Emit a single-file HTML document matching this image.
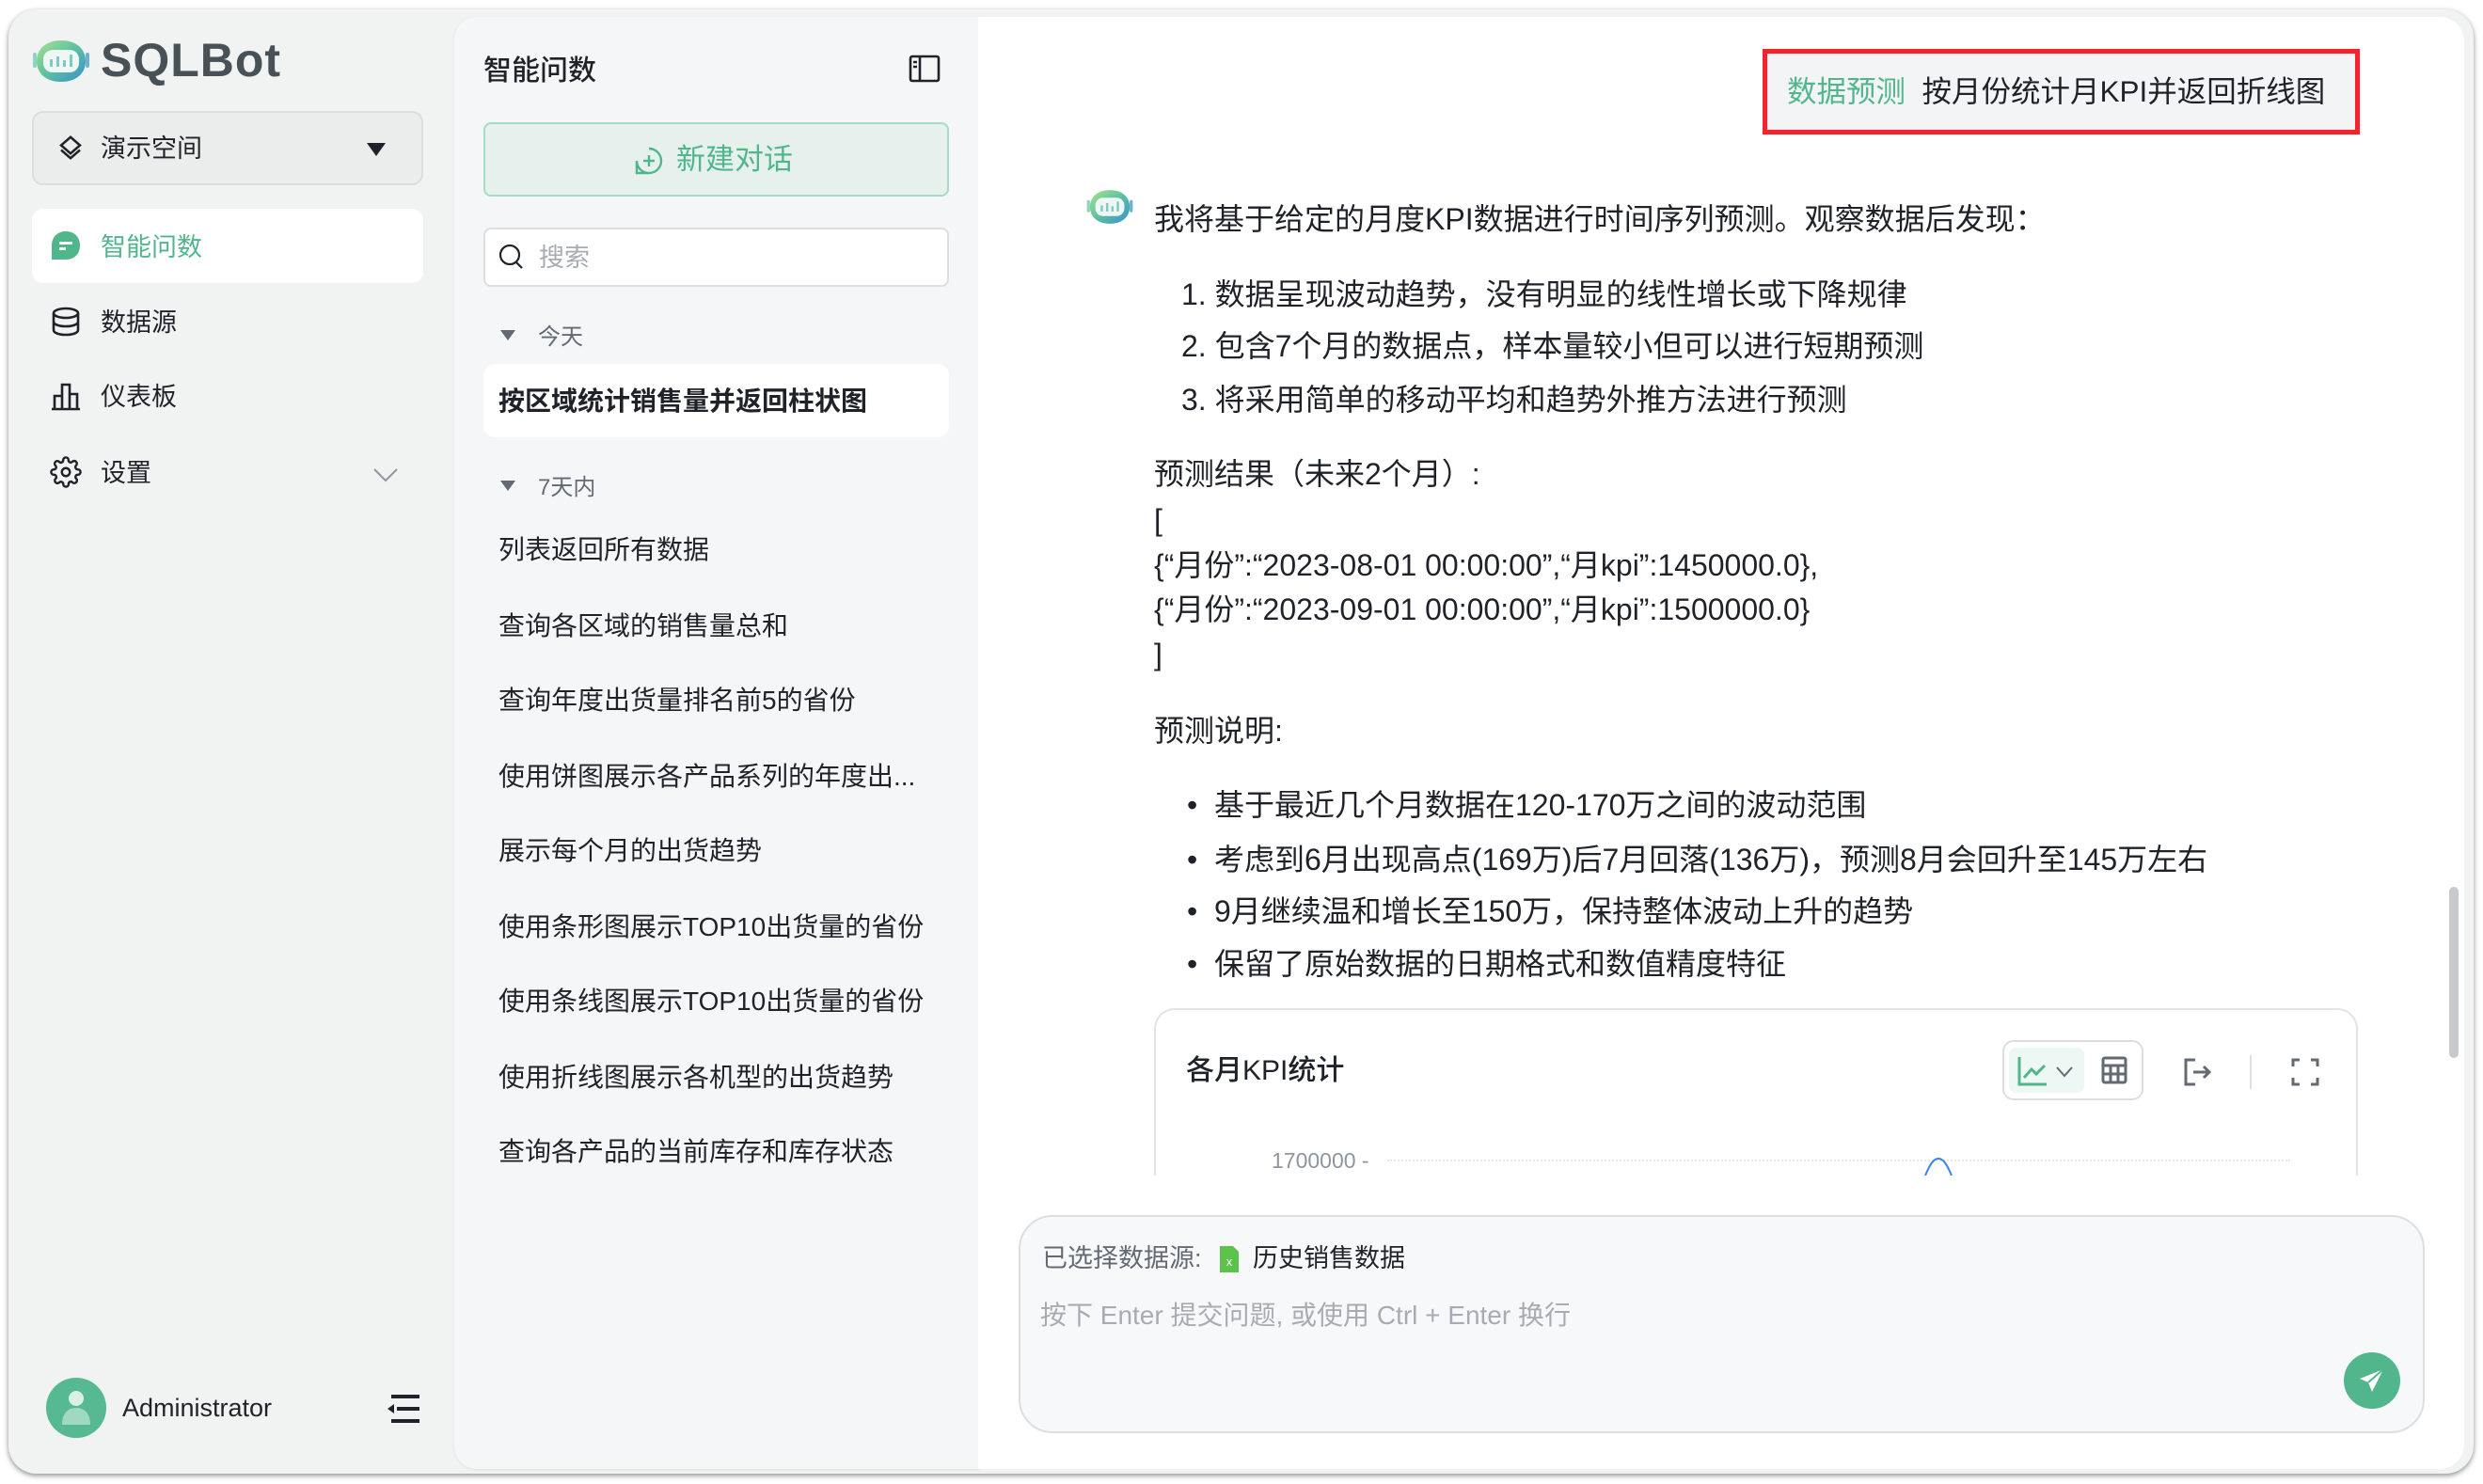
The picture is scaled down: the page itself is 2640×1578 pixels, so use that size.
<!DOCTYPE html>
<html><head><meta charset="utf-8"><style>
*{margin:0;padding:0;box-sizing:border-box}
body{width:2640px;height:1578px;background:#fff;position:relative;overflow:hidden;font-family:"Liberation Sans","Noto Sans CJK SC",sans-serif;color:#1f2329}
.a{position:absolute;white-space:nowrap}
.win{position:absolute;left:9px;top:10px;width:2621px;height:1557px;background:#f1f2f2;border-radius:30px;box-shadow:0 2px 6px rgba(0,0,0,.45)}
.mid{position:absolute;left:483px;top:18px;width:560px;height:1544px;background:#f5f6f7;border-radius:24px 0 0 24px;box-shadow:0 1px 3px rgba(0,0,0,.08)}
.main{position:absolute;left:1040px;top:18px;width:1580px;height:1544px;background:#fff;border-radius:0 26px 26px 0}
.t27{font-size:27px;line-height:40px}
.t28{font-size:28px;line-height:40px}
.ln{font-size:32px;line-height:44px;color:#1f2329;margin-top:-1px}
</style></head><body>
<div class="win"></div>
<div class="mid"></div>
<div class="main"></div>

<!-- logo -->
<svg class="a" style="left:33px;top:40px" width="64" height="50" viewBox="0 0 64 50"><defs><linearGradient id="g" x1="0" y1="0" x2="1" y2="1"><stop offset="0" stop-color="#a8e28f"/><stop offset=".5" stop-color="#5cc0a0"/><stop offset="1" stop-color="#3a8fd0"/></linearGradient></defs><rect x="2" y="16" width="4" height="16" rx="2" fill="#8fd3c2"/><rect x="58" y="16" width="4" height="16" rx="2" fill="#6ab3d0"/><path d="M32 3C48 3 58 12 58 25C58 38 48 47 32 47C16 47 6 38 6 25C6 12 16 3 32 3Z" fill="url(#g)"/><rect x="13" y="13" width="38" height="24" rx="10" fill="#eef7f4"/><rect x="20" y="23" width="3" height="8" fill="#7fc9c0"/><rect x="27" y="20" width="3" height="11" fill="#7fc9c0"/><rect x="34" y="24" width="3" height="7" fill="#7fc9c0"/><rect x="41" y="18" width="3" height="13" fill="#7fc9c0"/></svg>
<div class="a" style="left:107px;top:32px;font-size:50px;font-weight:bold;color:#485156;line-height:64px;letter-spacing:1px">SQLBot</div>

<!-- workspace -->
<div class="a" style="left:34px;top:118px;width:416px;height:79px;background:#ebecec;border:2px solid #dcdddd;border-radius:12px"></div>
<svg class="a" style="left:60px;top:142px" width="30" height="30" viewBox="0 0 24 24" fill="none" stroke="#1f2329" stroke-width="2"><path d="M12 3l8 7-8 7-8-7z"/><path d="M4 14l8 7 8-7"/></svg>
<div class="a t27" style="left:107px;top:138px">演示空间</div>
<div class="a" style="left:390px;top:152px;width:0;height:0;border-left:10px solid transparent;border-right:10px solid transparent;border-top:14px solid #1f2329"></div>

<!-- menu -->
<div class="a" style="left:34px;top:222px;width:416px;height:79px;background:#fff;border-radius:12px"></div>
<svg class="a" style="left:54px;top:245px" width="32" height="32" viewBox="0 0 32 32"><path d="M16 1C25 1 31 7 31 16C31 25 25 31 16 31H1V16C1 7 7 1 16 1Z" fill="#52b68d"/><rect x="9" y="12" width="14" height="3" fill="#fff"/><rect x="9" y="18" width="7" height="3" fill="#fff"/></svg>
<div class="a t27" style="left:107px;top:243px;color:#52b68d">智能问数</div>
<svg class="a" style="left:54px;top:326px" width="32" height="32" viewBox="0 0 32 32" fill="none" stroke="#1f2329" stroke-width="2.6"><ellipse cx="16" cy="7" rx="13" ry="5"/><path d="M3 7v18c0 3 6 5 13 5s13-2 13-5V7M3 16c0 3 6 5 13 5s13-2 13-5"/></svg>
<div class="a t27" style="left:107px;top:323px">数据源</div>
<svg class="a" style="left:54px;top:405px" width="32" height="32" viewBox="0 0 32 32" fill="none" stroke="#1f2329" stroke-width="2.6"><path d="M1 30h30M4 30V16h8v14M12 30V4h8v26M20 30V14h8v16"/></svg>
<div class="a t27" style="left:107px;top:402px">仪表板</div>
<svg class="a" style="left:53px;top:485px" width="34" height="34" viewBox="0 0 24 24" fill="none" stroke="#1f2329" stroke-width="1.7"><circle cx="12" cy="12" r="3"/><path d="M19.4 15a1.65 1.65 0 0 0 .33 1.82l.06.06a2 2 0 1 1-2.83 2.830l-.06-.06a1.65 1.65 0 0 0-1.82-.33 1.65 1.65 0 0 0-1 1.51V21a2 2 0 1 1-4 0v-.09A1.650 1.65 0 0 0 9 19.4a1.65 1.65 0 0 0-1.82.33l-.06.06a2 2 0 1 1-2.83-2.83l.06-.06A1.65 1.65 0 0 0 4.68 15a1.65 1.65 0 0 0-1.51-1H3a2 2 0 1 1 0-4h.09A1.65 1.65 0 0 0 4.6 9a1.65 1.65 0 0 0-.33-1.82l-.06-.06a2 2 0 1 1 2.83-2.83l.06.06A1.65 1.65 0 0 0 9 4.68a1.65 1.65 0 0 0 1-1.51V3a2 2 0 1 1 4 0v.09a1.65 1.65 0 0 0 1 1.51 1.65 1.65 0 0 0 1.82-.33l.06-.06a2 2 0 1 1 2.83 2.83l-.06.06A1.65 1.65 0 0 0 19.4 9a1.65 1.65 0 0 0 1.51 1H21a2 2 0 1 1 0 4h-.09a1.65 1.65 0 0 0-1.51 1z"/></svg>
<div class="a t27" style="left:107px;top:483px">设置</div>
<svg class="a" style="left:396px;top:496px" width="28" height="18" viewBox="0 0 28 18" fill="none" stroke="#8f959e" stroke-width="2"><path d="M2 3l12 12 12-12"/></svg>

<!-- user -->
<svg class="a" style="left:49px;top:1465px" width="64" height="64" viewBox="0 0 64 64"><circle cx="32" cy="32" r="32" fill="#56b991"/><circle cx="32" cy="22" r="8" fill="#d8f0e6"/><path d="M17 50c0-12 6-18 15-18s15 6 15 18z" fill="#9fd9c1"/></svg>
<div class="a" style="left:130px;top:1477px;font-size:27px;line-height:40px">Administrator</div>
<svg class="a" style="left:412px;top:1483px" width="36" height="30" viewBox="0 0 36 30" fill="#1f2329"><rect x="4" y="0" width="30" height="4"/><rect x="10" y="13" width="24" height="4"/><rect x="4" y="26" width="30" height="4"/><path d="M0 15l7-5v10z"/></svg>

<!-- middle panel -->
<div class="a" style="left:514px;top:55px;font-size:30px;line-height:42px;font-weight:500">智能问数</div>
<svg class="a" style="left:966px;top:58px" width="34" height="30" viewBox="0 0 34 30" fill="none" stroke="#1f2329" stroke-width="2.6"><rect x="2" y="2" width="30" height="26" rx="2"/><path d="M12 2v26M5 8h4M5 13h4"/></svg>
<div class="a" style="left:514px;top:130px;width:495px;height:79px;background:#e6f1ed;border:2px solid #a6dcc4;border-radius:8px"></div>
<svg class="a" style="left:675px;top:156px" width="30" height="30" viewBox="0 0 30 30" fill="none" stroke="#52b68d" stroke-width="2.4"><path d="M15 2a13 13 0 1 1-13 13V28h13" /><path d="M15 9v12M9 15h12"/></svg>
<div class="a" style="left:719px;top:149px;font-size:31px;line-height:42px;color:#52b68d">新建对话</div>
<div class="a" style="left:514px;top:242px;width:495px;height:63px;background:#fff;border:2px solid #dcdee2;border-radius:8px"></div>
<svg class="a" style="left:530px;top:258px" width="28" height="30" viewBox="0 0 28 30" fill="none" stroke="#1f2329" stroke-width="2.2"><circle cx="12" cy="13" r="10"/><path d="M19 21l6 6"/></svg>
<div class="a" style="left:573px;top:254px;font-size:27px;line-height:40px;color:#a8abb2">搜索</div>

<div class="a" style="left:532px;top:351px;border-left:8px solid transparent;border-right:8px solid transparent;border-top:11px solid #646a73"></div>
<div class="a" style="left:572px;top:342px;font-size:24px;line-height:34px;color:#646a73">今天</div>
<div class="a" style="left:514px;top:387px;width:495px;height:78px;background:#fff;border-radius:12px"></div>
<div class="a t28" style="left:530px;top:407px;font-weight:bold">按区域统计销售量并返回柱状图</div>
<div class="a" style="left:532px;top:511px;border-left:8px solid transparent;border-right:8px solid transparent;border-top:11px solid #646a73"></div>
<div class="a" style="left:572px;top:502px;font-size:24px;line-height:34px;color:#646a73">7天内</div>
<div class="a t28" style="left:530px;top:565px">列表返回所有数据</div>
<div class="a t28" style="left:530px;top:646px">查询各区域的销售量总和</div>
<div class="a t28" style="left:530px;top:725px">查询年度出货量排名前5的省份</div>
<div class="a t28" style="left:530px;top:806px">使用饼图展示各产品系列的年度出...</div>
<div class="a t28" style="left:530px;top:885px">展示每个月的出货趋势</div>
<div class="a t28" style="left:530px;top:966px">使用条形图展示TOP10出货量的省份</div>
<div class="a t28" style="left:530px;top:1045px">使用条线图展示TOP10出货量的省份</div>
<div class="a t28" style="left:530px;top:1126px">使用折线图展示各机型的出货趋势</div>
<div class="a t28" style="left:530px;top:1205px">查询各产品的当前库存和库存状态</div>

<!-- question -->
<div class="a" style="left:1874px;top:52px;width:635px;height:91px;background:#f3f4f6;border:5px solid #f5222d"></div>
<div class="a" style="left:1900px;top:76px;font-size:31.5px;line-height:42px"><span style="color:#52b68d">数据预测</span>&nbsp; 按月份统计月KPI并返回折线图</div>

<!-- answer -->
<svg class="a" style="left:1154px;top:197px" width="52" height="46" viewBox="0 0 64 50"><defs><linearGradient id="g2" x1="0" y1="0" x2="1" y2="1"><stop offset="0" stop-color="#a8e28f"/><stop offset=".5" stop-color="#5cc0a0"/><stop offset="1" stop-color="#3a8fd0"/></linearGradient></defs><rect x="2" y="16" width="4" height="16" rx="2" fill="#8fd3c2"/><rect x="58" y="16" width="4" height="16" rx="2" fill="#6ab3d0"/><path d="M32 3C48 3 58 12 58 25C58 38 48 47 32 47C16 47 6 38 6 25C6 12 16 3 32 3Z" fill="url(#g2)"/><rect x="13" y="13" width="38" height="24" rx="10" fill="#eef7f4"/><rect x="20" y="23" width="3" height="8" fill="#7fc9c0"/><rect x="27" y="20" width="3" height="11" fill="#7fc9c0"/><rect x="34" y="24" width="3" height="7" fill="#7fc9c0"/><rect x="41" y="18" width="3" height="13" fill="#7fc9c0"/></svg>
<div class="a ln" style="left:1227px;top:212px">我将基于给定的月度KPI数据进行时间序列预测。观察数据后发现：</div>
<div class="a ln" style="left:1256px;top:292px">1. 数据呈现波动趋势，没有明显的线性增长或下降规律</div>
<div class="a ln" style="left:1256px;top:347px">2. 包含7个月的数据点，样本量较小但可以进行短期预测</div>
<div class="a ln" style="left:1256px;top:404px">3. 将采用简单的移动平均和趋势外推方法进行预测</div>
<div class="a ln" style="left:1227px;top:483px">预测结果（未来2个月）:</div>
<div class="a ln" style="left:1227px;top:532px">[</div>
<div class="a ln" style="left:1227px;top:580px">{“月份”:“2023-08-01 00:00:00”,“月kpi”:1450000.0},</div>
<div class="a ln" style="left:1227px;top:627px">{“月份”:“2023-09-01 00:00:00”,“月kpi”:1500000.0}</div>
<div class="a ln" style="left:1227px;top:675px">]</div>
<div class="a ln" style="left:1227px;top:756px">预测说明:</div>
<div class="a ln" style="left:1262px;top:835px">•&nbsp; 基于最近几个月数据在120-170万之间的波动范围</div>
<div class="a ln" style="left:1262px;top:893px">•&nbsp; 考虑到6月出现高点(169万)后7月回落(136万)，预测8月会回升至145万左右</div>
<div class="a ln" style="left:1262px;top:948px">•&nbsp; 9月继续温和增长至150万，保持整体波动上升的趋势</div>
<div class="a ln" style="left:1262px;top:1004px">•&nbsp; 保留了原始数据的日期格式和数值精度特征</div>

<!-- chart card -->
<div class="a" style="left:1227px;top:1072px;width:1280px;height:178px;border:2px solid #e2e4e8;border-bottom:none;border-radius:22px 22px 0 0;overflow:hidden"></div>
<div class="a" style="left:1261px;top:1118px;font-size:30px;line-height:42px;font-weight:500">各月KPI统计</div>
<div class="a" style="left:2129px;top:1106px;width:150px;height:64px;border:2px solid #dcdee2;border-radius:12px"></div>
<div class="a" style="left:2136px;top:1114px;width:80px;height:48px;background:#edf7f3;border-radius:8px"></div>
<svg class="a" style="left:2144px;top:1122px" width="34" height="34" viewBox="0 0 34 34" fill="none" stroke="#52b68d" stroke-width="3"><path d="M3 2v29h29"/><path d="M8 24l8-9 5 5 9-9"/></svg>
<svg class="a" style="left:2185px;top:1133px" width="20" height="14" viewBox="0 0 20 14" fill="none" stroke="#646a73" stroke-width="2"><path d="M2 2l8 9 8-9"/></svg>
<svg class="a" style="left:2234px;top:1123px" width="28" height="30" viewBox="0 0 28 30" fill="none" stroke="#646a73" stroke-width="3"><rect x="2" y="2" width="24" height="26" rx="2"/><path d="M2 10h24M2 19h24M10 10v18M18 10v18"/></svg>
<svg class="a" style="left:2322px;top:1125px" width="30" height="30" viewBox="0 0 30 30" fill="none" stroke="#646a73" stroke-width="3"><path d="M12 2H2v26h10M10 15h17M21 9l6 6-6 6"/></svg>
<div class="a" style="left:2392px;top:1122px;width:2px;height:36px;background:#dee0e3"></div>
<svg class="a" style="left:2436px;top:1125px" width="30" height="30" viewBox="0 0 30 30" fill="none" stroke="#646a73" stroke-width="3"><path d="M2 9V2h7M21 2h7v7M28 21v7h-7M9 28H2v-7"/></svg>
<div class="a" style="left:1352px;top:1220px;font-size:23px;line-height:28px;color:#8f959e">1700000 -</div>
<div class="a" style="left:1475px;top:1233px;width:960px;border-top:2px dotted #e4e6ea"></div>
<svg class="a" style="left:2046px;top:1228px" width="30" height="22" viewBox="0 0 30 22" fill="none" stroke="#3b82f6" stroke-width="2"><path d="M1 22C6 10 10 4 15 4S24 10 29 22"/></svg>

<!-- input -->
<div class="a" style="left:1083px;top:1292px;width:1495px;height:232px;background:#f7f8fa;border:2px solid #dcdee2;border-radius:36px"></div>
<div class="a" style="left:1108px;top:1318px;font-size:27px;line-height:40px;color:#646a73">已选择数据源:</div>
<svg class="a" style="left:1297px;top:1325px" width="20" height="28" viewBox="0 0 20 28"><path d="M0 0h14l6 6v22H0z" fill="#5bc24a"/><text x="10" y="21" font-size="13" fill="#fff" text-anchor="middle" font-family="Liberation Sans">x</text></svg>
<div class="a" style="left:1332px;top:1318px;font-size:27px;line-height:40px;color:#1f2329">历史销售数据</div>
<div class="a" style="left:1106px;top:1379px;font-size:28px;line-height:40px;color:#a8abb2">按下 Enter 提交问题, 或使用 Ctrl + Enter 换行</div>
<svg class="a" style="left:2492px;top:1438px" width="60" height="60" viewBox="0 0 60 60"><circle cx="30" cy="30" r="30" fill="#52b68d"/><path d="M42 18L17 28l9 4 4 10z" fill="#fff"/><path d="M26 32l16-14" stroke="#52b68d" stroke-width="2"/></svg>

<!-- scrollbar -->
<div class="a" style="left:2604px;top:943px;width:10px;height:182px;background:#c8c9cc;border-radius:5px"></div>
</body></html>
